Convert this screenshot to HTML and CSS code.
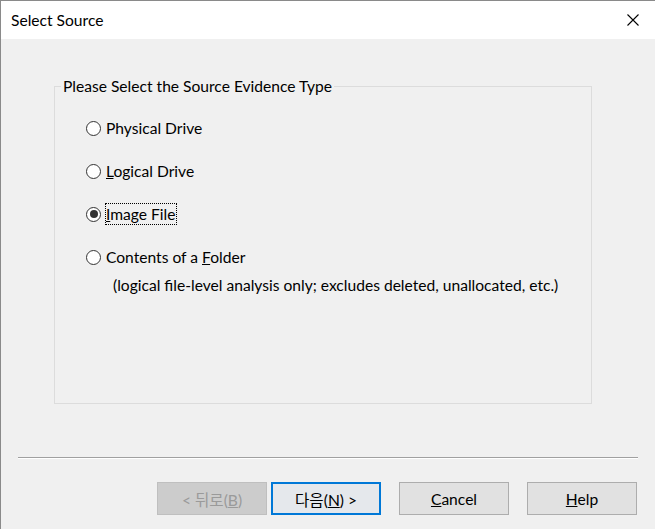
FILE: index.html
```html
<!DOCTYPE html>
<html lang="en">
<head>
<meta charset="utf-8">
<title>Select Source</title>
<link rel="stylesheet" href="styles.css">
</head>
<body>
<div class="window">
  <div class="titlebar">
    <span class="title">Select Source</span>
    <span class="close" aria-label="Close">
      <svg width="12" height="12" viewBox="0 0 12 12"><path d="M0.5 0.5 L11.5 11.5 M11.5 0.5 L0.5 11.5" stroke="#000" stroke-width="1.1" fill="none"/></svg>
    </span>
  </div>
  <div class="content">
    <fieldset class="group">
      <legend class="legend">Please Select the Source Evidence Type</legend>
      <div class="options">
        <label class="option"><input type="radio" name="src" class="radio"><span class="text">Physical Drive</span></label>
        <label class="option"><input type="radio" name="src" class="radio"><span class="text"><u>L</u>ogical Drive</span></label>
        <label class="option"><input type="radio" name="src" class="radio" checked><span class="text focus"><u>I</u>mage File</span></label>
        <div class="folder">
          <label class="option"><input type="radio" name="src" class="radio"><span class="text">Contents of a <u>F</u>older</span></label>
          <div class="note">(logical file-level analysis only; excludes deleted, unallocated, etc.)</div>
        </div>
      </div>
    </fieldset>
    <div class="separator"></div>
    <div class="buttons">
      <button class="btn disabled" disabled>&lt; 뒤로(<u>B</u>)</button>
      <button class="btn default">다음(<u>N</u>) &gt;</button>
      <button class="btn gap"><u>C</u>ancel</button>
      <button class="btn gap"><u>H</u>elp</button>
    </div>
  </div>
</div>
</body>
</html>
```
FILE: styles.css
```css
html, body {
  margin: 0;
  padding: 0;
}
body {
  width: 655px;
  height: 529px;
  overflow: hidden;
  font-family: Lato, "Noto Sans CJK KR", sans-serif;
  font-size: 15.6px;
  color: #000;
}
.window {
  width: 655px;
  height: 529px;
  box-sizing: border-box;
  border-top: 1px solid #8a8a8a;
  border-left: 1px solid #8a8a8a;
  display: flex;
  flex-direction: column;
  background: #f0f0f0;
}
.titlebar {
  height: 38px;
  flex: none;
  background: #fff;
  display: flex;
  align-items: center;
  justify-content: space-between;
  padding: 0 16px 0 10px;
}
.title {
  line-height: 20px;
}
.close {
  display: flex;
  width: 12px;
  height: 12px;
}
.content {
  flex: 1;
  display: flex;
  flex-direction: column;
}
.group {
  margin: 37px 0 0 53px;
  width: 538px;
  height: 328px;
  box-sizing: border-box;
  border: 1px solid #dcdcdc;
  padding: 22px 0 0 6px;
}
.legend {
  padding: 0 2px;
  line-height: 20px;
}
.options {
  display: flex;
  flex-direction: column;
  gap: 23px;
  margin-left: 25px;
}
.option {
  display: flex;
  align-items: center;
  height: 20px;
  line-height: 20px;
}
.radio {
  appearance: none;
  -webkit-appearance: none;
  margin: 0 5px 0 0;
  width: 15px;
  height: 15px;
  box-sizing: border-box;
  border: 1px solid #333;
  border-radius: 50%;
  background: #fff;
  display: flex;
  align-items: center;
  justify-content: center;
  flex: none;
}
.radio:checked::after {
  content: "";
  width: 8px;
  height: 8px;
  border-radius: 50%;
  background: #333;
}
.text.focus {
  outline: 1px dotted #000;
  outline-offset: 0;
  padding: 0 1px 0 0;
}
.note {
  margin: 8px 0 0 27px;
  line-height: 20px;
}
.separator {
  margin: 53px 17px 0 17px;
  height: 1px;
  background: #a0a0a0;
  border-bottom: 1px solid #fff;
}
.buttons {
  margin-top: 23px;
  display: flex;
  justify-content: flex-end;
  padding-right: 18px;
}
.btn {
  width: 110px;
  height: 33px;
  box-sizing: border-box;
  font-family: Lato, "Noto Sans CJK KR", sans-serif;
  font-size: 15.6px;
  color: #000;
  background: #e1e1e1;
  border: 1px solid #adadad;
  padding: 0;
  margin-left: 18px;
}
.btn.disabled {
  background: #cccccc;
  border-color: #bfbfbf;
  color: #9a9a9a;
  margin-left: 0;
}
.btn.default {
  margin-left: 4px;
  border: 2px solid #0078d7;
  background: #e5e8ec;
}
```
